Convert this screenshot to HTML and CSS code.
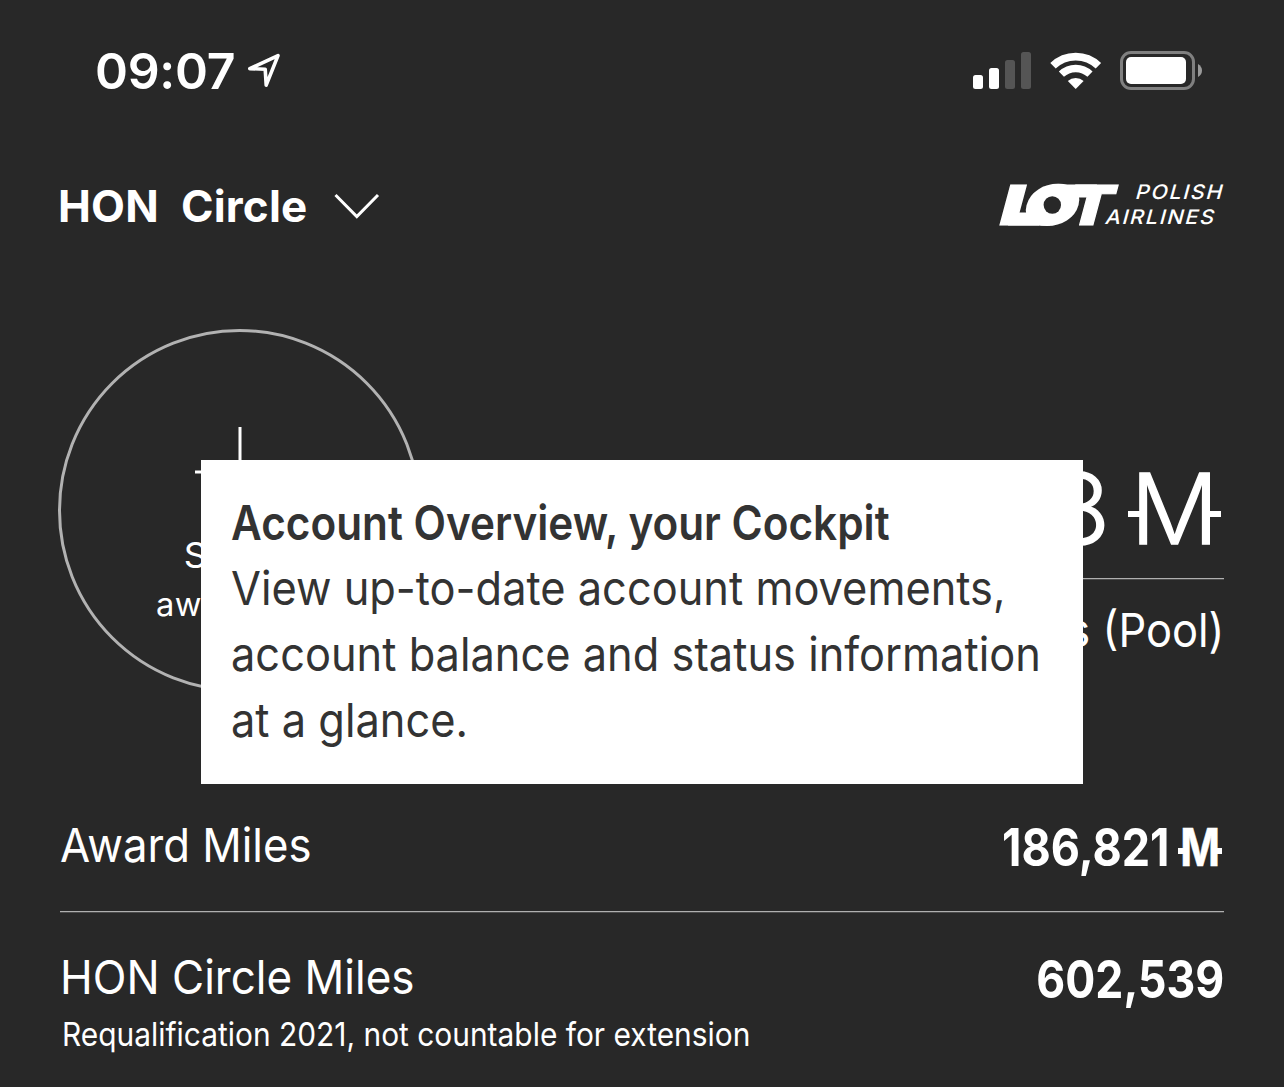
FILE: index.html
```html
<!DOCTYPE html>
<html lang="en">
<head>
<meta charset="utf-8">
<title>Account Overview</title>
<link rel="stylesheet" href="styles.css">
</head>
<body>
<div class="status-bar">
  <div class="status-left">
    <span class="time">09:07</span>
    <svg class="location" width="34" height="36" viewBox="247 53 34 36"><path d="M249.8 68.6 L278 55.6 L266.2 85.2 L265.2 69.2 Z" fill="none" stroke="#fff" stroke-width="3.6" stroke-linejoin="round"/></svg>
  </div>
  <svg class="indicators" width="232" height="44" viewBox="972 49 232 44">
    <g fill="#fff"><rect x="973" y="75" width="10" height="14" rx="2.5"/><rect x="989" y="68" width="10" height="21" rx="2.5"/></g>
    <g fill="#555"><rect x="1005" y="60" width="10" height="29" rx="2.5"/><rect x="1021" y="52" width="10" height="37" rx="2.5"/></g>
    <g fill="none" stroke="#fff">
      <path d="M1053 65.8 A32.7 32.7 0 0 1 1098.4 65.8" stroke-width="7.8"/>
      <path d="M1061.4 74.2 A20.6 20.6 0 0 1 1090 74.2" stroke-width="7.4"/>
    </g>
    <path d="M1075.7 89 L1067.8 81 A11.6 11.6 0 0 1 1083.6 81 Z" fill="#fff"/>
    <rect x="1121.5" y="52.5" width="72" height="36" rx="9.5" fill="none" stroke="#808080" stroke-width="3"/>
    <rect x="1126" y="57" width="60" height="27" rx="5" fill="#fff"/>
    <path d="M1198 64 Q1202 66.5 1202 70.5 Q1202 74.5 1198 77 Z" fill="#9a9a9a"/>
  </svg>
</div>

<header class="header">
  <div class="status-select">
    <span>HON</span><span>Circle</span>
    <svg class="chevron" width="46" height="26" viewBox="0 0 46 26"><path d="M1.5 2 L22.8 23.5 L44 2" fill="none" stroke="#fff" stroke-width="3"/></svg>
  </div>
  <svg class="logo" width="226" height="46" viewBox="998 182 226 46">
    <g transform="translate(0 224.5) skewX(-15)" fill="#fff" stroke="#fff">
      <text class="logo-mark" x="996.5" y="-.5" textLength="44" lengthAdjust="spacingAndGlyphs">L</text>
      <text class="logo-mark logo-o" x="1023.5" y="-4" textLength="47" lengthAdjust="spacingAndGlyphs">O</text>
      <text class="logo-mark" x="1063" y="-.5" textLength="46" lengthAdjust="spacingAndGlyphs">T</text>
      <g stroke="none">
        <rect x="1008" y="-13" width="42" height="13"/>
        <rect x="1044" y="-41" width="42" height="13"/>
      </g>
      <text class="logo-name" x="1127.5" y="-26.5" textLength="88" lengthAdjust="spacingAndGlyphs">POLISH</text>
      <text class="logo-name" x="1104" y="-1.2" textLength="110" lengthAdjust="spacingAndGlyphs">AIRLINES</text>
    </g>
    <circle cx="1052.3" cy="204" r="17" fill="#fff"/>
    <circle cx="1052.3" cy="204" r="8.7" fill="#282828"/>
  </svg>
</header>

<main>
  <section class="hero">
    <div class="spend">
      <svg class="plus" width="90" height="90" viewBox="0 0 90 90"><path d="M45 0V90M0 45H90" stroke="#fff" stroke-width="3"/></svg>
      <span class="spend-title">Spend</span>
      <span class="spend-text">award miles</span>
    </div>
    <div class="balance">
      <div class="balance-value">8<span class="mile mile-large"><span>M</span></span></div>
      <div class="balance-label"><span>Award Miles (Pool)</span></div>
    </div>
    <aside class="tooltip">
      <h1>Account Overview, your Cockpit</h1>
      <p>View up-to-date account movements,<br>account balance and status information<br>at a glance.</p>
    </aside>
  </section>

  <section class="row award">
    <h2 class="row-label award-label">Award Miles</h2>
    <div class="row-value award-value"><span class="number">186,821</span><span class="mile"><span>M</span></span></div>
  </section>
  <section class="row hon">
    <div>
      <h2 class="row-label hon-label">HON Circle Miles</h2>
      <p class="note">Requalification 2021, not countable for extension</p>
    </div>
    <div class="row-value"><span class="number hon-number">602,539</span></div>
  </section>
</main>
</body>
</html>
```
FILE: styles.css
```css
* { box-sizing: border-box; }
body {
  margin: 0;
  width: 1284px;
  height: 1087px;
  overflow: hidden;
  background: #282828;
  color: #fff;
  font-family: Inter, "Liberation Sans", sans-serif;
}
h1, h2, p { margin: 0; font-weight: 400; }
svg { display: block; flex: none; overflow: visible; }

.status-bar {
  display: flex;
  justify-content: space-between;
  align-items: center;
  height: 142px;
  padding: 0 80px 0 95px;
}
.status-left { display: flex; align-items: center; gap: 12px; }
.time { font-size: 50px; line-height: 60px; font-weight: 600; letter-spacing: -.3px; }

.header {
  display: flex;
  justify-content: space-between;
  align-items: center;
  height: 128px;
  padding: 0 60px 0 58px;
}
.status-select { display: flex; align-items: center; gap: 22px; font-size: 44px; font-weight: 700; letter-spacing: .2px; }
.chevron { margin-left: 5px; }
.logo-mark { font-size: 55px; font-weight: 900; stroke-width: 1; letter-spacing: 0; }
.logo-o { font-size: 47px; stroke-width: 7; }
.logo-name { font-size: 20px; font-weight: 500; letter-spacing: 1.5px; stroke: none; }

.hero {
  position: relative;
  display: flex;
  justify-content: space-between;
  margin: 59px 60px 0 58px;
  height: 363px;
}
.spend {
  display: flex;
  flex-direction: column;
  align-items: center;
  width: 363px;
  height: 363px;
  padding-top: 95px;
  border: 3px solid #b2b2b2;
  border-radius: 50%;
  white-space: nowrap;
}
.spend-title { margin-top: 14px; font-size: 35px; line-height: 49px; transform: scaleX(1.04); }
.spend-text { align-self: flex-start; margin-left: 95px; font-size: 32px; line-height: 50px; letter-spacing: .5px; transform: scaleX(1.02); transform-origin: left; }

.balance { display: flex; flex-direction: column; width: 740px; padding-top: 129px; text-align: right; }
.balance-value {
  display: flex;
  justify-content: flex-end;
  gap: 18px;
  height: 121px;
  padding-right: 3px;
  font-size: 98px;
  line-height: 101px;
  font-weight: 300;
  -webkit-text-stroke: 1.4px #fff;
  border-bottom: 1px solid #b0b0b0;
  box-shadow: 0 1px #4c4c4c;
}
.balance-label { margin-top: 21px; font-size: 47px; line-height: 60px; }
.balance-label span { display: inline-block; transform: scaleX(.925); transform-origin: right; }

.mile {
  position: relative;
  display: flex;
  justify-content: center;
  width: 44px;
}
.mile span { transform: scaleX(.82); -webkit-text-stroke: .6px #fff; }
.mile::before, .mile::after {
  content: "";
  position: absolute;
  top: 30px;
  width: 7px;
  height: 6px;
  background: #fff;
}
.mile::before { left: 0; }
.mile::after { right: 0; }
.mile-large { width: 93px; }
.mile-large span { transform: none; -webkit-text-stroke: 1.4px #fff; }
.mile-large::before, .mile-large::after { top: 53px; width: 14px; height: 6px; }

.tooltip {
  position: absolute;
  left: 143px;
  top: 131px;
  width: 882px;
  height: 324px;
  padding: 31px 30px 0;
  background: #fff;
  color: #333;
  white-space: nowrap;
}
.tooltip h1 { font-size: 48px; line-height: 64px; font-weight: 600; transform: scaleX(.881); transform-origin: left; }
.tooltip p { font-size: 46.5px; line-height: 66px; transform: scaleX(.933); transform-origin: left; }

.row { display: flex; justify-content: space-between; margin: 0 60px; }
.award {
  height: 97px;
  margin-top: 123px;
  border-bottom: 1px solid #b0b0b0;
  box-shadow: 0 1px #4c4c4c;
}
.row-label { font-size: 47px; line-height: 60px; transform-origin: left; white-space: nowrap; }
.award-label { transform: scaleX(.93); }
.hon { margin-top: 35px; }
.hon-label { transform: scaleX(.937); }
.note { margin-left: 2px; font-size: 33px; line-height: 54px; transform: scaleX(.906); transform-origin: left; white-space: nowrap; }
.row-value { display: flex; padding-top: 3px; font-size: 52px; line-height: 60px; font-weight: 700; }
.award-value { gap: 7px; padding-right: 2px; }
.number { transform: scaleX(.865); transform-origin: right; }
.award-value .number { margin-right: 2px; margin-left: -2px; }
.hon-number { transform: scaleX(.857); }
```
